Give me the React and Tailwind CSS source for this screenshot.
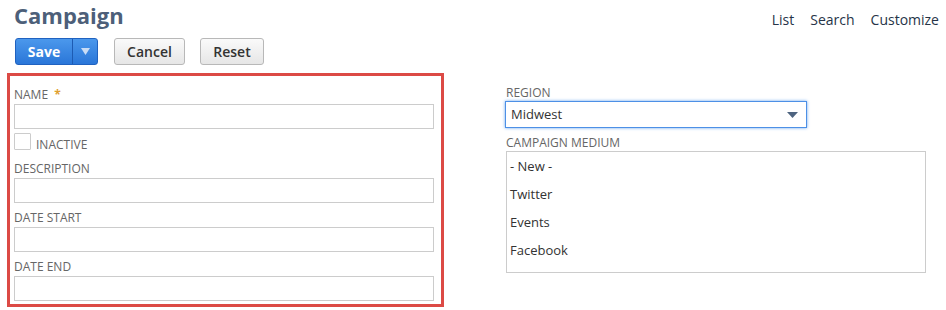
export default function App() {
  const field = (label) => (
    <div className="mt-[7px]">
      <div className="h-[16px] mb-[1px] text-[12px] leading-[16px] text-[#666] uppercase">{label}</div>
      <div className="h-[25px] border border-[#ccc] bg-white" />
    </div>
  );

  return (
    <div className="w-[946px] h-[310px] bg-white font-['Open_Sans',sans-serif] text-[#333] overflow-hidden">
      <div className="flex justify-between items-start pl-[14px] pr-[7px]">
        <h1 className="pt-[1px] text-[22px] leading-[28px] font-bold text-[#4d5f79]">Campaign</h1>
        <div className="flex gap-[16px] pt-[10px] text-[14px] leading-[20px] text-[#263448]">
          <span>List</span>
          <span>Search</span>
          <span>Customize</span>
        </div>
      </div>

      <div className="flex mt-[8px] pl-[15px]">
        <div className="flex h-[27px] rounded-[3px] border border-[#2062c0] bg-gradient-to-b from-[#4b98ec] to-[#2a76d8] text-white text-[14px] font-bold overflow-hidden">
          <span className="w-[56px] flex items-center justify-center">Save</span>
          <span className="w-[25px] flex items-center justify-center border-l border-[#1d5bb3]">
            <svg width="9" height="7" viewBox="0 0 9 7"><path d="M0 0h9L4.5 7z" fill="#c9dcf5" /></svg>
          </span>
        </div>
        <button className="ml-[16px] w-[71px] h-[27px] rounded-[3px] border border-[#b8b8b8] bg-gradient-to-b from-[#fafafa] to-[#e6e6e6] text-[14px] font-semibold text-[#333]">Cancel</button>
        <button className="ml-[15px] w-[64px] h-[27px] rounded-[3px] border border-[#b8b8b8] bg-gradient-to-b from-[#fafafa] to-[#e6e6e6] text-[14px] font-semibold text-[#333]">Reset</button>
      </div>

      <div className="flex items-start mt-[8px]">
        <div className="ml-[7px] w-[437px] border-[3px] border-[#dc4a45] pl-[4px] pr-[7px] pt-[3px] pb-[3px]">
          <div className="mt-2">
            <div className="h-[16px] mb-[1px] text-[12px] leading-[16px] text-[#666] uppercase">
              Name <span className="ml-[3px] text-[#e0a030] font-bold">*</span>
            </div>
            <div className="h-[25px] border border-[#ccc] bg-white" />
          </div>
          <div className="flex items-end mt-[4px] h-[17px]">
            <div className="w-[17px] h-[17px] border border-[#ccc] rounded-[1px] bg-white" />
            <span className="ml-[5px] mb-[-2px] text-[12px] leading-[14px] text-[#666] uppercase">Inactive</span>
          </div>
          <div className="h-[4px]" />
          {field('Description')}
          {field('Date Start')}
          {field('Date End')}
        </div>

        <div className="ml-[61px] pt-[12px]">
          <div className="h-[16px] text-[12px] leading-[16px] text-[#666] uppercase pl-[1px]">Region</div>
          <div className="flex items-center justify-between w-[302px] h-[27px] border border-[#4d90e6] shadow-[0_0_3px_#6aa7ee] bg-white pl-[5px] pr-[8px] text-[13px] text-[#333]">
            <span>Midwest</span>
            <svg width="11" height="6" viewBox="0 0 11 6"><path d="M0 0h11L5.5 6z" fill="#4e6480" /></svg>
          </div>
          <div className="mt-[7px] h-[16px] text-[12px] leading-[16px] text-[#666] uppercase pl-[1px]">Campaign Medium</div>
          <div className="ml-[1px] w-[420px] h-[122px] border border-[#ccc] bg-white pl-[3px] text-[13px] leading-[28px] text-[#333]">
            <div>- New -</div>
            <div>Twitter</div>
            <div>Events</div>
            <div>Facebook</div>
          </div>
        </div>
      </div>
    </div>
  );
}
